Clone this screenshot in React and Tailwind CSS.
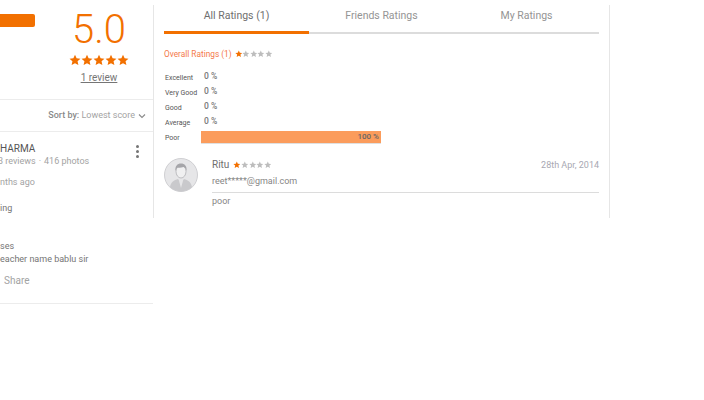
const Star = ({ on, size = 9 }) => (
  <svg width={size} height={size} viewBox="0 0 24 24" className={on ? "fill-[#f27000]" : "fill-[#bdbdbd]"}>
    <path d="M12 1.5l3.2 7.1 7.7.8-5.8 5.2 1.7 7.6L12 18.3l-6.8 3.9 1.7-7.6-5.8-5.2 7.7-.8z" />
  </svg>
);

const Stars = ({ count = 1, size = 7.6, className = "" }) => (
  <span className={`flex ${className}`}>
    {[1, 2, 3, 4, 5].map((n) => (
      <Star key={n} on={n <= count} size={size} />
    ))}
  </span>
);

const bars = [
  { label: "Excellent", value: "0 %" },
  { label: "Very Good", value: "0 %" },
  { label: "Good", value: "0 %" },
  { label: "Average", value: "0 %" },
];

const Avatar = () => (
  <svg width="34" height="34" viewBox="0 0 34 34" className="shrink-0">
    <circle cx="17" cy="17" r="16.5" fill="#e6e6e8" stroke="#cfcfd2" />
    <path d="M6 29c1-5 4-7 8-8l3 3 3-3c4 1 7 3 8 8a16 16 0 0 1-22 0z" fill="#c9c9cc" />
    <path d="M14.5 21l2.5 9 2.5-9-2.5 2z" fill="#e6e6e8" />
    <ellipse cx="17" cy="13.5" rx="5" ry="6.5" fill="#f0f0f1" stroke="#a9a9ad" strokeWidth="0.7" />
    <path d="M11.5 13c-.8-5 2-7.500 5.500-7.500s6.300 2.500 5.500 7.500c-.5-2.500-1.500-3.500-3-4-2 .8-5 .8-6 .5-1 .8-1.500 2-2 3.500z" fill="#a5a5a9" />
  </svg>
);

export default function App() {
  return (
    <div className="flex h-[400px] w-[704px] overflow-hidden bg-white font-['Roboto',sans-serif]">
      <div className="w-[153px] shrink-0">
        <div className="flex h-[100px] border-b border-[#ececec]">
          <div className="mt-[14px] h-[13px] w-[35px] rounded-r-[2px] bg-[#f27000]"></div>
          <div className="ml-[34px] flex w-[60px] flex-col items-center">
            <div className="mt-[9px] text-[40px] leading-[42px] font-light text-[#f27000]">5.0</div>
            <Stars count={5} size={12} className="mt-[3px]" />
            <div className="mt-[5px] text-[10px] leading-[14px] text-[#757575] underline">1 review</div>
          </div>
        </div>
        <div className="flex h-[32px] items-center justify-end gap-[3px] border-b border-[#ececec] pr-[7px] text-[9px] text-[#a3a3a3]">
          <span><b className="font-medium text-[#8a8a8a]">Sort by:</b> Lowest score</span>
          <svg width="8" height="8" viewBox="0 0 8 8" fill="none" stroke="#8a8a8a" strokeWidth="1.100"><path d="M1 2.500l3 3 3-3" /></svg>
        </div>
        <div className="relative h-[172px] border-b border-[#ececec] text-[#757575]">
          <div className="pt-[10px] text-[10px] leading-[13px] text-[#555555]">HARMA</div>
          <div className="ml-[-2px] flex gap-[3px] text-[9px] leading-[12px] text-[#a3a3a3]">
            <span>3 reviews</span>
            <span>·</span>
            <span>416 photos</span>
          </div>
          <div className="mt-[9px] text-[9px] leading-[12px] text-[#a3a3a3]">nths ago</div>
          <div className="mt-[14px] text-[9px] leading-[12px]">ing</div>
          <div className="mt-[26px] text-[9px] leading-[12px]">ses</div>
          <div className="mt-[1px] text-[9px] leading-[12px]">eacher name bablu sir</div>
          <div className="mt-[9px] ml-[4px] text-[10px] leading-[14px] text-[#a3a3a3]">Share</div>
          <div className="absolute top-[13px] right-[14px] flex flex-col gap-[2px]">
            <i className="h-[3px] w-[3px] rounded-full bg-[#757575]"></i>
            <i className="h-[3px] w-[3px] rounded-full bg-[#757575]"></i>
            <i className="h-[3px] w-[3px] rounded-full bg-[#757575]"></i>
          </div>
        </div>
      </div>

      <div className="mt-[5px] h-[213px] w-[457px] border-x border-[#e6e6e6] pr-[10px] pl-[10px]">
        <div className="flex h-[29px] border-b-2 border-[#dcdcdc] text-[10.500px] text-[#949494]">
          <div className="mb-[-2px] flex w-[145px] justify-center border-b-[3px] border-[#f27000] pt-[3px] text-[#6e6e6e]">All Ratings (1)</div>
          <div className="flex w-[145px] justify-center pt-[3px]">Friends Ratings</div>
          <div className="flex w-[145px] justify-center pt-[3px]">My Ratings</div>
        </div>

        <div className="mt-[14px] flex items-center gap-[3px] text-[8.300px] leading-[12px] text-[#f4794a]">
          Overall Ratings (1)
          <Stars />
        </div>

        <div className="mt-[11px] flex flex-col gap-[3px] text-[7px] text-[#555555]">
          {bars.map((bar) => (
            <div key={bar.label} className="flex h-[12px] items-center">
              <span className="mt-[2px] ml-[1px] w-[39px]">{bar.label}</span>
              <span className="mt-[-1px] text-[8.500px] font-medium text-[#777777]">{bar.value}</span>
            </div>
          ))}
          <div className="flex h-[13px] items-center">
            <span className="mt-[1px] ml-[1px] w-[36px]">Poor</span>
            <div className="flex h-[13px] w-[180px] items-center justify-end border-b border-[#e0e0e0] bg-[#fb9c5c] pr-[2px] text-[8px] font-medium text-[#666666]">100 %</div>
          </div>
        </div>

        <div className="mt-[14px] flex gap-[14px]">
          <Avatar />
          <div className="flex-1 pt-[1px]">
            <div className="flex items-center text-[10px] leading-[12px] text-[#6e6e6e]">
              <span>Ritu</span>
              <Stars className="ml-[4px]" />
              <span className="ml-auto text-[9px] text-[#a8a8b2]">28th Apr, 2014</span>
            </div>
            <div className="mt-[4px] border-b border-[#dcdcdc] pb-[5px] text-[9px] leading-[12px] text-[#858585]">reet*****@gmail.com</div>
            <div className="mt-[2px] text-[9px] leading-[12px] text-[#858585]">poor</div>
          </div>
        </div>
      </div>
    </div>
  );
}
